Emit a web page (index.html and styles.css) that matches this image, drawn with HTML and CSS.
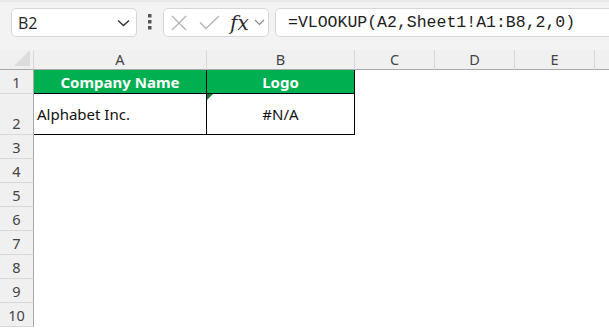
FILE: index.html
```html
<!DOCTYPE html>
<html lang="en">
<head>
  <meta charset="UTF-8" />
  <title>VLOOKUP sheet</title>
  <link rel="stylesheet" href="styles.css">
</head>
<body>
  <!-- Formula bar -->
  <div class="toolbar">
    <div class="namebox">
      <span>B2</span>
      <svg width="13" height="8" viewBox="0 0 13 8"><path d="M1 1.5 L6.5 6.5 L12 1.5" fill="none" stroke="#333" stroke-width="1.4"/></svg>
    </div>
    <div class="dots">
      <svg width="4" height="16" viewBox="0 0 4 16"><rect x="0" y="0" width="3.5" height="3.5" fill="#555"/><rect x="0" y="6" width="3.5" height="3.5" fill="#555"/><rect x="0" y="12" width="3.5" height="3.5" fill="#555"/></svg>
    </div>
    <div class="fxbox">
      <svg class="cancel" width="16" height="16" viewBox="0 0 16 16"><path d="M1 1 L15 15 M15 1 L1 15" stroke="#b4b4b4" stroke-width="1.4"/></svg>
      <svg class="enter" width="21" height="15" viewBox="0 0 21 15"><path d="M1 7.5 L7 13.5 L20 1" fill="none" stroke="#b4b4b4" stroke-width="1.4"/></svg>
      <span class="fx">fx</span>
      <svg class="fxdrop" width="11" height="7" viewBox="0 0 11 7"><path d="M1 1 L5.5 5.5 L10 1" fill="none" stroke="#888" stroke-width="1.2"/></svg>
    </div>
    <div class="formula">=VLOOKUP(A2,Sheet1!A1:B8,2,0)</div>
  </div>

  <!-- Sheet grid -->
  <div class="sheet">
    <div class="corner"><svg width="16" height="16" viewBox="0 0 16 16"><path d="M16 0 L16 16 L0 16 Z" fill="#dcdcdc"/></svg></div>
    <div class="colhead">A</div>
    <div class="colhead">B</div>
    <div class="colhead">C</div>
    <div class="colhead">D</div>
    <div class="colhead">E</div>
    <div class="colhead last"></div>

    <div class="rowhead">1</div>
    <div class="cell title">Company Name</div>
    <div class="cell title right">Logo</div>
    <div class="cell"></div><div class="cell"></div><div class="cell"></div><div class="cell"></div>

    <div class="rowhead">2</div>
    <div class="cell data">Alphabet Inc.</div>
    <div class="cell data center right"><span class="flag"></span>#N/A</div>
    <div class="cell"></div><div class="cell"></div><div class="cell"></div><div class="cell"></div>

    <div class="rowhead">3</div><div class="cell"></div><div class="cell"></div><div class="cell"></div><div class="cell"></div><div class="cell"></div><div class="cell"></div>
    <div class="rowhead">4</div><div class="cell"></div><div class="cell"></div><div class="cell"></div><div class="cell"></div><div class="cell"></div><div class="cell"></div>
    <div class="rowhead">5</div><div class="cell"></div><div class="cell"></div><div class="cell"></div><div class="cell"></div><div class="cell"></div><div class="cell"></div>
    <div class="rowhead">6</div><div class="cell"></div><div class="cell"></div><div class="cell"></div><div class="cell"></div><div class="cell"></div><div class="cell"></div>
    <div class="rowhead">7</div><div class="cell"></div><div class="cell"></div><div class="cell"></div><div class="cell"></div><div class="cell"></div><div class="cell"></div>
    <div class="rowhead">8</div><div class="cell"></div><div class="cell"></div><div class="cell"></div><div class="cell"></div><div class="cell"></div><div class="cell"></div>
    <div class="rowhead">9</div><div class="cell"></div><div class="cell"></div><div class="cell"></div><div class="cell"></div><div class="cell"></div><div class="cell"></div>
    <div class="rowhead">10</div><div class="cell"></div><div class="cell"></div><div class="cell"></div><div class="cell"></div><div class="cell"></div><div class="cell"></div>
  </div>
</body>
</html>
```

FILE: styles.css
```css
/* Excel-like formula bar and sheet */
body {
  margin: 0;
  background-color: #fff;
  font-family: "Noto Sans", sans-serif;
  overflow: hidden;
}

.toolbar {
  display: flex;
  align-items: flex-start;
  height: 50px;
  box-sizing: border-box;
  padding: 8px 0 0 11px;
  background-color: #f3f3f3;
  border-top: 2px solid #e8e8e8;
}
.namebox {
  display: flex;
  align-items: center;
  justify-content: space-between;
  width: 126px;
  height: 29px;
  margin-top: -2px;
  box-sizing: border-box;
  padding: 0 6px 0 6px;
  background-color: #fff;
  border: 1px solid #d6d6d6;
  border-radius: 5px;
  font-family: "Open Sans", sans-serif;
  font-size: 16px;
  color: #222;
}
.dots {
  display: flex;
  justify-content: center;
  width: 26px;
  padding-top: 6px;
  margin-top: -2px;
}
.fxbox {
  display: flex;
  align-items: center;
  width: 106px;
  height: 29px;
  margin-top: -2px;
  box-sizing: border-box;
  padding-left: 7px;
  background-color: #fff;
  border: 1px solid #d6d6d6;
  border-radius: 5px;
}
.fxbox .enter {
  margin-left: 12px;
}
.fxbox .fx {
  margin-left: 10px;
  font-family: "DejaVu Serif", serif;
  font-style: italic;
  font-size: 20px;
  color: #2b2b2b;
  line-height: 1;
}
.fxbox .fxdrop {
  margin-left: 5px;
}
.formula {
  flex: 1;
  height: 29px;
  margin: -2px -6px 0 6px;
  box-sizing: border-box;
  padding-left: 12px;
  line-height: 27px;
  background-color: #fff;
  border: 1px solid #d6d6d6;
  border-radius: 5px;
  font-family: "Liberation Mono", monospace;
  font-size: 16.5px;
  color: #1e1e1e;
  white-space: nowrap;
}

/* Grid */
.sheet {
  display: grid;
  grid-template-columns: 34px 173px 148px 80px 80px 80px 1fr;
  grid-template-rows: 20px 24px 41px repeat(8, 24px);
}
.corner, .colhead {
  background-color: #f0f0f0;
  border-bottom: 1px solid #a8a8a8;
  box-sizing: border-box;
}
.corner {
  display: flex;
  align-items: flex-end;
  justify-content: flex-end;
  padding: 0 3px 3px 0;
  border-right: 1px solid #d8d8d8;
}
.colhead {
  border-right: 1px solid #d8d8d8;
  text-align: center;
  font-size: 14.5px;
  line-height: 19px;
  color: #444;
}
.colhead.last {
  border-right: none;
}
.rowhead {
  display: flex;
  align-items: flex-end;
  justify-content: center;
  padding-bottom: 1px;
  box-sizing: border-box;
  background-color: #f0f0f0;
  border-right: 1px solid #a8a8a8;
  border-bottom: 1px solid #d8d8d8;
  font-size: 14.5px;
  color: #444;
}
.cell {
  position: relative;
  box-sizing: border-box;
  font-size: 15px;
  color: #111;
}
.cell.title {
  display: flex;
  align-items: center;
  justify-content: center;
  background-color: #00b050;
  color: #fff;
  font-weight: bold;
  border-right: 1px solid #000;
  border-bottom: 1px solid #000;
}
.cell.data {
  display: flex;
  align-items: center;
  padding-left: 3px;
  border-right: 1px solid #000;
  border-bottom: 1px solid #000;
}
.cell.center {
  justify-content: center;
  padding-left: 0;
}
/* error indicator in the corner of B2 */
.flag {
  position: absolute;
  left: 0;
  top: 0;
  width: 0;
  height: 0;
  border-top: 6px solid #1e7b34;
  border-right: 6px solid transparent;
}
```
